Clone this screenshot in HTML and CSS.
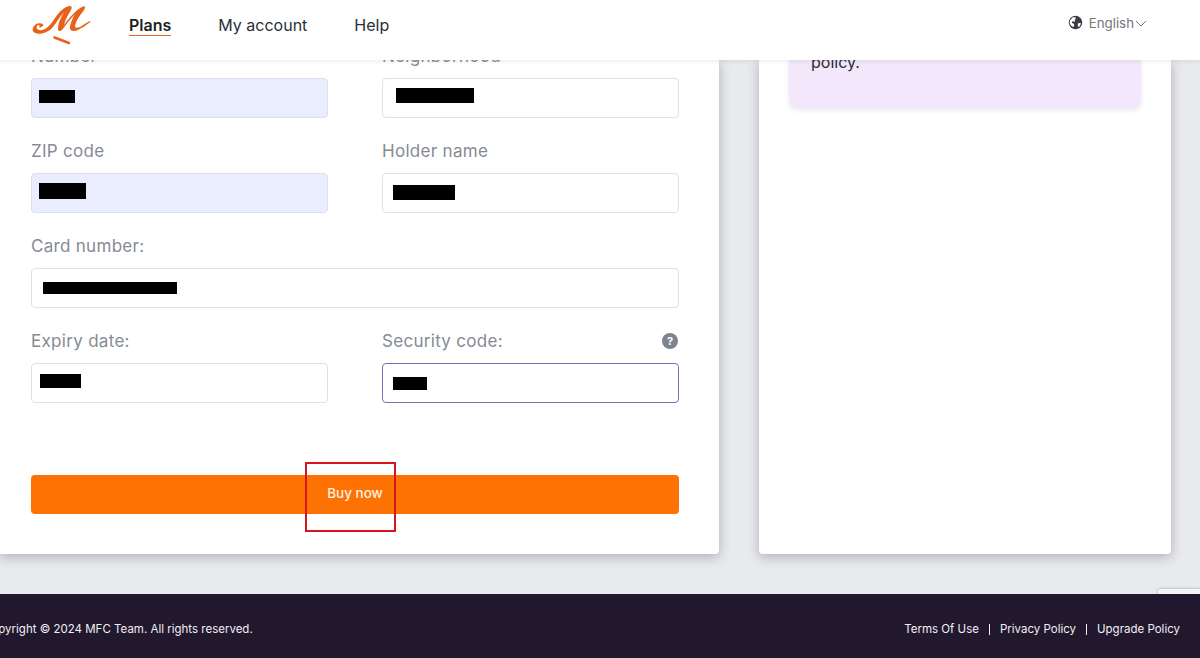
FILE: index.html
```html
<!DOCTYPE html>
<html lang="en">
<head>
<meta charset="utf-8">
<title>Checkout</title>
<link rel="stylesheet" href="styles.css">
</head>
<body>
<div class="page">
  <header class="topbar">
    <svg class="logo" viewBox="0 0 60 42" width="60" height="42" aria-hidden="true">
      <path class="logo-fill" d="M1 25C2 21 7 19 11 21C12 23 9 25 7 24C8 23 8 22 6 22C4 23 4 26 7 27C13 28 18 23 23 15C27 9 33 3 38 3C40 3 40 5 39 7C36 12 33 17 32 22C37 15 44 7 50 4C53 2 54 4 52 7C48 12 44 18 43 23C43 25 45 25 48 24C51 22 54 20 58 18L58.500 19C54 22 50 25 46 27C41 29 37 28 38 23C39 19 41 14 43 11C38 16 34 22 30 27C28 29 26 28 26 26C26 20 29 14 32 10C28 13 25 19 21 24C16 30 8 32 3 30C1 29 0 27 1 25Z"/>
      <path class="logo-stroke" d="M22.500 34.500l14.500 5.500"/>
    </svg>
    <nav class="nav">
      <a class="nav-link nav-active">Plans</a>
      <a class="nav-link">My account</a>
      <a class="nav-link">Help</a>
    </nav>
    <div class="lang">
      <svg class="globe" viewBox="0 0 16 16" width="15" height="15" aria-hidden="true">
        <circle cx="8" cy="8" r="7.2" fill="#3a3d42"/>
        <path fill="#fff" d="M2.200 5.600 5.400 2.200c1 .3 2.400.3 3 1 .2.9-.7 1.100-1.200 1.800-.3 1 .6 1.300.1 2.200-1 .3-1.500-.7-2.500-.6-.9.2-.7 1.400-.3 2 .5.7 1.500.5 2 1.200.3 1.100-.4 2.200-.8 3.200C3.700 12 2.200 10.500 1.800 8.300c0-1 .1-1.800.4-2.700zM10.500 9c.8-.5 2-.7 3.200-.3-.2 1.800-1.100 3.300-2.600 4.300-.5-.6-.2-1.500-.5-2.200-.1-.6-.5-1.300-.1-1.800z"/>
      </svg>
      <span class="lang-name">English</span>
      <svg class="chev" viewBox="0 0 12 7" width="12" height="7" aria-hidden="true"><path d="M1 1l5 5 5-5"/></svg>
    </div>
  </header>

  <main class="stage">
    <section class="card card-form">
      <div class="form-grid">
        <div class="field">
          <label class="label">Number</label>
          <div class="input input-filled"><span class="mask mask-number"></span></div>
        </div>
        <div class="field">
          <label class="label">Neighborhood</label>
          <div class="input"><span class="mask mask-hood"></span></div>
        </div>
        <div class="field">
          <label class="label">ZIP code</label>
          <div class="input input-filled"><span class="mask mask-zip"></span></div>
        </div>
        <div class="field">
          <label class="label">Holder name</label>
          <div class="input"><span class="mask mask-holder"></span></div>
        </div>
        <div class="field field-wide">
          <label class="label">Card number:</label>
          <div class="input"><span class="mask mask-card"></span></div>
        </div>
        <div class="field">
          <label class="label">Expiry date:</label>
          <div class="input"><span class="mask mask-expiry"></span></div>
        </div>
        <div class="field">
          <div class="label-row">
            <label class="label">Security code:</label>
            <span class="help-dot">?</span>
          </div>
          <div class="input input-focus"><span class="mask mask-cvv"></span></div>
        </div>
      </div>
      <button class="buy" type="button">Buy now<span class="callout"></span></button>
    </section>

    <aside class="card card-side">
      <div class="notice"><p class="notice-text">policy.</p></div>
    </aside>
    <div class="recaptcha"></div>
  </main>

  <footer class="footer">
    <p class="copy">Copyright © 2024 MFC Team. All rights reserved.</p>
    <ul class="legal">
      <li class="legal-item">Terms Of Use</li>
      <li class="legal-item">Privacy Policy</li>
      <li class="legal-item">Upgrade Policy</li>
    </ul>
  </footer>
</div>
</body>
</html>
```

FILE: styles.css
```css
* { box-sizing: border-box; }

html, body {
  margin: 0;
  height: 100%;
  overflow: hidden;
}

body {
  font-family: "Inter", "Liberation Sans", sans-serif;
  background: #e9eaee;
  color: #212529;
}

.page {
  height: 658px;
  display: flex;
  flex-direction: column;
}

/* Top bar */
.topbar {
  height: 60px;
  flex: none;
  display: flex;
  align-items: flex-start;
  padding: 15px 53px 0 31px;
  background: #fff;
  box-shadow: 0 1px 5px rgba(40, 40, 60, 0.1);
  position: relative;
  z-index: 2;
}

.logo { flex: none; margin-top: -12px; margin-left: 1px; }
.logo-fill { fill: #e8631a; }
.logo-stroke { stroke: #e8631a; stroke-width: 2.6; stroke-linecap: round; fill: none; }

.nav {
  display: flex;
  gap: 47px;
  margin-left: 37px;
  font-size: 16px;
  line-height: 20px;
}

.nav-link { color: #2b2f38; }

.nav-active {
  font-weight: 600;
  color: #1c1f26;
  height: 20px;
  box-sizing: content-box;
  border-bottom: 1px solid #e0691c;
}

.lang {
  margin-left: auto;
  height: 15px;
  display: flex;
  align-items: center;
  font-size: 13.300px;
  color: #74777d;
}

.globe { margin-right: 6px; }
.chev { margin-left: 1px; margin-top: 1px; }
.chev path { fill: none; stroke: #74777d; stroke-width: 1; }

/* Main stage */
.stage {
  flex: 1;
  min-height: 0;
  display: flex;
  gap: 40px;
  padding-bottom: 40px;
  position: relative;
}

.card {
  background: #fff;
  box-shadow: 0 3px 12px rgba(50, 50, 70, 0.32);
  overflow: hidden;
  display: flex;
  flex-direction: column;
}

.card-form {
  width: 719px;
  flex: none;
  justify-content: flex-end;
  padding: 0 40px 40px 31px;
  border-radius: 0 0 4px 0;
}

.card-side {
  width: 412px;
  flex: none;
  padding: 0 30px;
  border-radius: 0 0 4px 4px;
}

.form-grid {
  flex: none;
  display: grid;
  grid-template-columns: 297px 297px;
  column-gap: 54px;
  row-gap: 21px;
}

.field-wide { grid-column: 1 / -1; }

.label {
  display: block;
  height: 24px;
  margin-bottom: 10px;
  font-size: 17px;
  letter-spacing: 0.3px;
  line-height: 25px;
  color: #858b94;
}

.label-row {
  display: flex;
  justify-content: space-between;
  align-items: flex-start;
}

.help-dot {
  width: 16px;
  height: 16px;
  border-radius: 50%;
  margin-top: 4px;
  margin-right: 1px;
  background: #7f838f;
  color: #fff;
  font-size: 11px;
  font-weight: 700;
  line-height: 16px;
  text-align: center;
}

.input {
  height: 40px;
  display: flex;
  align-items: flex-start;
  background: #fff;
  border: 1px solid #dfe1e6;
  border-radius: 4px;
}

.input-filled {
  background: #e9edfd;
  border-color: #dcdfec;
}

.input-focus { border-color: #6f74b8; }

.mask { display: block; background: #000; }
.mask-number { width: 36px; height: 13px; margin: 11px 0 0 7px; }
.mask-hood { width: 78px; height: 15px; margin: 9px 0 0 13px; }
.mask-zip { width: 47px; height: 16px; margin: 9px 0 0 7px; }
.mask-holder { width: 62px; height: 15px; margin: 11px 0 0 10px; }
.mask-card { width: 134px; height: 12px; margin: 13px 0 0 11px; }
.mask-expiry { width: 41px; height: 14px; margin: 10px 0 0 8px; }
.mask-cvv { width: 34px; height: 13px; margin: 13px 0 0 10px; }

.buy {
  flex: none;
  position: relative;
  height: 39px;
  margin-top: 72px;
  padding: 0 0 3px;
  border: 0;
  border-radius: 4px;
  background: #fd7203;
  color: #fff1e4;
  font: 500 13.500px/36px "Inter", "Liberation Sans", sans-serif;
  text-align: center;
}

.callout {
  position: absolute;
  left: 274px;
  top: -13px;
  width: 91px;
  height: 70px;
  border: 2.500px solid #d8141f;
}

/* Side card */
.notice {
  height: 48px;
  flex: none;
  padding: 0 22px;
  background: #f3e8fb;
  border-radius: 0 0 8px 8px;
  box-shadow: 0 2px 5px rgba(90, 60, 120, 0.12);
  overflow: visible;
}

.notice-text {
  margin: -10px 0 0;
  font-size: 16px;
  line-height: 24px;
  color: #2b2a33;
}

.recaptcha {
  position: absolute;
  right: 0;
  bottom: 0;
  width: 42px;
  height: 5px;
  background: #f4f5f7;
  box-shadow: 0 0 3px rgba(0, 0, 0, 0.35);
  border-radius: 2px 0 0 0;
}

/* Footer */
.footer {
  height: 64px;
  flex: none;
  display: flex;
  align-items: center;
  justify-content: space-between;
  padding: 6px 20px 0 0;
  background: #21182e;
  color: #f1eef4;
  font-size: 11.500px;
  position: relative;
}

.copy { margin: 0 0 0 -17px; white-space: nowrap; }

.legal {
  display: flex;
  margin: 0;
  padding: 0;
  list-style: none;
}

.legal-item {
  line-height: 11px;
  padding: 0 10px;
  border-left: 1px solid #f1eef4;
}

.legal-item:first-child { border-left: 0; }
.legal-item:last-child { padding-right: 0; }
```
